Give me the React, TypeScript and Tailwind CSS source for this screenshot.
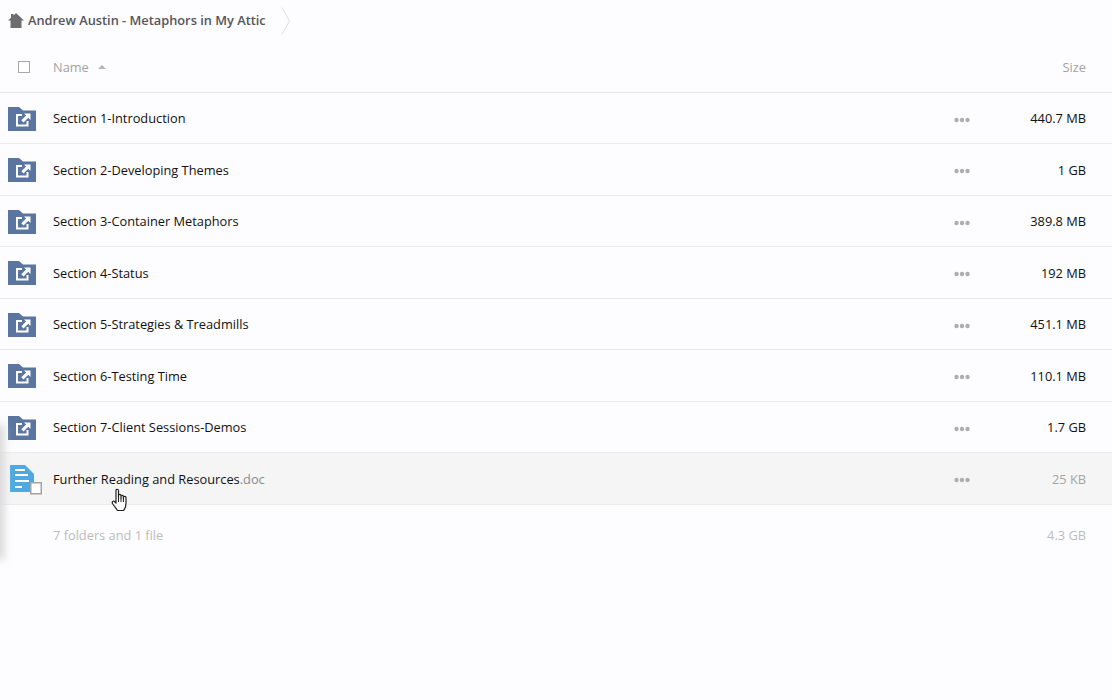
const rows = [
  ["Section 1-Introduction", "440.7 MB"],
  ["Section 2-Developing Themes", "1 GB"],
  ["Section 3-Container Metaphors", "389.8 MB"],
  ["Section 4-Status", "192 MB"],
  ["Section 5-Strategies & Treadmills", "451.1 MB"],
  ["Section 6-Testing Time", "110.1 MB"],
  ["Section 7-Client Sessions-Demos", "1.7 GB"],
];

function FolderIcon() {
  return (
    <svg width="28" height="24" viewBox="0 0 28 24" className="shrink-0">
      <path d="M0 0H11L15 3.500H28V24H0Z" fill="#5a759f" />
      <path d="M14 8H9V18.500H19.500V14" fill="none" stroke="#fff" strokeWidth="2" />
      <path d="M16 6.500H22.500V13L20.300 10.800L15.500 15.500L13.300 13.300L18.100 8.600Z" fill="#fff" />
    </svg>
  );
}

function DocIcon() {
  return (
    <svg width="32" height="30" viewBox="0 0 32 30" className="mt-[1px] shrink-0">
      <path d="M0 0H15L24 9V27H0Z" fill="#4ea9e3" />
      <path d="M5 5H15M5 10H18M5 16H19M5 22H12" stroke="#fff" strokeWidth="2" fill="none" />
      <rect x="20.750" y="17.750" width="10.500" height="11" fill="#fff" stroke="#a3a3a3" strokeWidth="1.500" />
    </svg>
  );
}

function Dots() {
  return (
    <svg width="16" height="6" viewBox="0 0 16 6" className="shrink-0">
      <circle cx="2.500" cy="3" r="2.200" fill="#aeaeb2" />
      <circle cx="8" cy="3" r="2.200" fill="#aeaeb2" />
      <circle cx="13.500" cy="3" r="2.200" fill="#aeaeb2" />
    </svg>
  );
}

function Row({ icon, name, ext, size, hover, muted }: { icon: React.ReactNode; name: string; ext?: string; size: string; hover?: boolean; muted?: boolean }) {
  return (
    <div className={`flex h-[51.5px] items-center border-b border-[#ebebeb] pt-[2px] ${hover ? "bg-[#f6f5f6]" : ""}`}>
      <div className={`flex w-[53px] shrink-0 items-center ${muted ? "pl-[10px]" : "pl-2"}`}>{icon}</div>
      <div className="flex-1 text-[12.8px] text-[#111]">
        {name}
        {ext && <span className="text-[#8a8a8a]">{ext}</span>}
      </div>
      <div className="mt-[2px] flex w-[16px] items-center"><Dots /></div>
      <div className={`w-[142px] pr-[26px] text-right text-[12.8px] ${muted ? "text-[#a5a5a5]" : "text-[#111]"}`}>{size}</div>
    </div>
  );
}

export default function App() {
  return (
    <div className="relative h-[700px] w-[1112px] overflow-hidden bg-[#fdfcfe] font-['Open_Sans',sans-serif]">
      <div className="absolute -left-[8px] top-[425px] h-[135px] w-[12px] bg-[#d8d8d8] blur-[4px]" />
      <div className="flex h-[41px] items-center pl-2">
        <svg width="16" height="15" viewBox="0 0 16 15" className="-mt-[1px] shrink-0">
          <path d="M8 0L16 7.500H13.500V15H2.500V7.500H0L3 4.700V1H5.500V2.400Z" fill="#6d6c6f" />
        </svg>
        <span className="ml-1 text-[12.8px] font-semibold text-[#55555a]">Andrew Austin - Metaphors in My Attic</span>
        <svg width="10" height="28" viewBox="0 0 10 28" className="ml-[15px] shrink-0">
          <path d="M1 0.500L8.500 14L1 27.500" fill="none" stroke="#dedede" strokeWidth="1" />
        </svg>
      </div>
      <div className="flex h-[51.5px] items-center border-b border-[#e6e6e6] pt-[2px]">
        <div className="w-[53px] shrink-0 pl-[18px]">
          <div className="size-3 border border-[#a8a8a8] bg-white" />
        </div>
        <div className="flex flex-1 items-center text-[12.8px] text-[#a3a3a3]">
          Name
          <svg width="8" height="4" viewBox="0 0 8 4" className="ml-[9px]"><path d="M4 0L8 4H0Z" fill="#b5b5b5" /></svg>
        </div>
        <div className="pr-[26px] text-[12.8px] text-[#a3a3a3]">Size</div>
      </div>
      {rows.map(([n, s]) => (
        <Row key={n} icon={<FolderIcon />} name={n} size={s} />
      ))}
      <Row icon={<DocIcon />} name="Further Reading and Resources" ext=".doc" size="25 KB" hover muted />
      <div className="flex h-[61px] items-center pl-[53px] pr-[26px] pt-[2px] text-[12.8px] text-[#bcbcbc]">
        <div className="flex-1">7 folders and 1 file</div>
        <div>4.3 GB</div>
      </div>
      <svg width="18" height="24" viewBox="0 0 18 24" className="absolute left-[111px] top-[488px]">
        <path d="M5 2.500C5 0.800 7.500 0.800 7.500 2.500V10V7.500C7.500 6 10 6 10 7.500V10.500V8.500C10 7 12.400 7 12.400 8.500V11V9.500C12.400 8 15 8 15 9.500V15C15 19 13.500 21.500 12.500 22.500H6.500L1.500 15.500C0.500 13.500 2.500 12.500 3.500 13.500L5 15Z" fill="#fff" stroke="#222" strokeWidth="1.200" strokeLinejoin="round" />
        <path d="M7.500 10V14M10 10.500V14M12.400 11V14" stroke="#222" strokeWidth="1" fill="none" />
      </svg>
    </div>
  );
}
